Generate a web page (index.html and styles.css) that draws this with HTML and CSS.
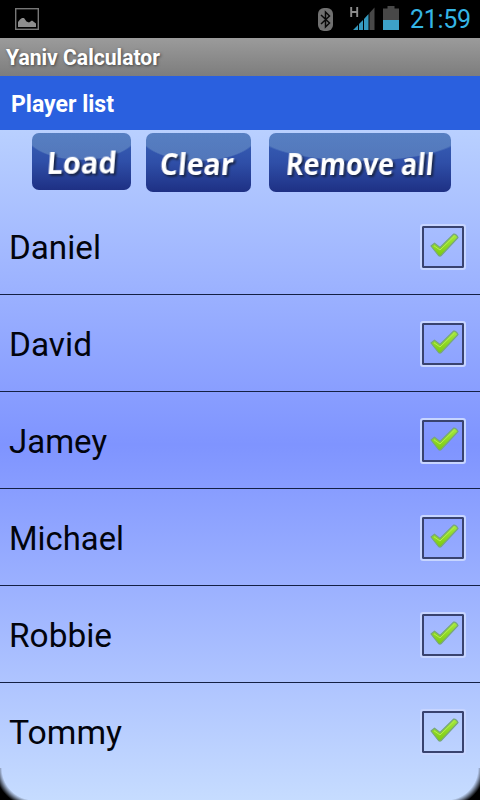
FILE: index.html
```html
<!DOCTYPE html>
<html lang="en">
<head>
    <meta charset="UTF-8">
    <meta name="viewport" content="width=device-width, initial-scale=1.0">
    <title>Yaniv Calculator</title>
    <link rel="stylesheet" href="styles.css">
</head>
<body>
    <!-- shared gradient and check mark -->
    <svg class="defs" width="0" height="0">
        <defs>
            <linearGradient id="green" x1="0" y1="0" x2="0" y2="1">
                <stop offset="0" stop-color="#a4e83c"/>
                <stop offset="1" stop-color="#7ccb10"/>
            </linearGradient>
            <symbol id="check" viewBox="0 0 42 42">
                <path d="M9 20 L12.5 17.2 L18 21.5 L31.5 8.2 Q34 7.6 36 11.5 L19.2 29.5 Q18 30.7 16.5 29.5 Z" fill="url(#green)" stroke="#78a67c" stroke-width="1.2" stroke-linejoin="round"/>
                <path d="M12 19.8 L18 24 L32.5 10" fill="none" stroke="#b4ec55" stroke-width="1"/>
            </symbol>
        </defs>
    </svg>

    <div class="status-bar">
        <svg class="picture-icon" width="24" height="22" viewBox="0 0 24 22">
            <rect x=".7" y=".7" width="22.6" height="20.6" fill="none" stroke="#777" stroke-width="1.4"/>
            <path d="M3 19 V14 L5 11.5 L7 10 H9 L11.5 13.5 L14 14.5 L17 12.5 L21 15.5 V19 Z" fill="#8e8e8e"/>
        </svg>
        <div class="status-icons">
            <svg width="15" height="23" viewBox="0 0 15 23">
                <rect width="15" height="23" rx="6" fill="#707070"/>
                <path d="M3 7 L11.5 15 L7.5 19 V4 L11.5 8 L3 16" fill="none" stroke="#080808" stroke-width="1.5"/>
            </svg>
            <svg class="signal" width="25" height="24" viewBox="0 0 25 24">
                <path d="M1.2 1 V11 M7.2 1 V11 M1 6 H7" stroke="#8c8c8c" stroke-width="1.9"/>
                <path d="M3 24 L8 19 V24 Z M9 18 L13 14 V24 H9 Z M14 13 L18.5 8 V24 H14 Z" fill="#3599be"/>
                <path d="M19.5 7 L24.5 1.5 V24 H19.5 Z" fill="#484848"/>
            </svg>
            <svg class="battery" width="16" height="24" viewBox="0 0 16 24">
                <path d="M0 2.5 H4.5 V0 H11.5 V2.5 H16 V14 H0 Z" fill="#484848"/>
                <path d="M0 14 H16 V24 H0 Z" fill="#3da1c8"/>
            </svg>
            <svg class="clock" width="62" height="30">
                <text x="0" y="24" textLength="61">21:59</text>
            </svg>
        </div>
    </div>

    <div class="title-bar"><svg width="170" height="38"><text x="0" y="27" textLength="154" lengthAdjust="spacingAndGlyphs">Yaniv Calculator</text></svg></div>
    <div class="list-header"><svg width="130" height="54"><text x="0" y="36" textLength="103" lengthAdjust="spacingAndGlyphs">Player list</text></svg></div>

    <main class="content">
        <div class="button-container">
            <button class="load"><svg width="99" height="57"><text transform="translate(14 41) rotate(-.5) skewX(-5)" textLength="70" lengthAdjust="spacingAndGlyphs">Load</text></svg></button>
            <button class="clear"><svg width="105" height="59"><text transform="translate(13 42) skewX(-5)" textLength="74" lengthAdjust="spacingAndGlyphs">Clear</text></svg></button>
            <button class="remove"><svg width="182" height="59"><text transform="translate(16 42) skewX(-5)" textLength="148" lengthAdjust="spacingAndGlyphs">Remove all</text></svg></button>
        </div>

        <ul class="players">
            <li><svg class="name" width="200" height="50"><text x="0" y="38" textLength="92" lengthAdjust="spacingAndGlyphs">Daniel</text></svg><span class="checkbox"><svg width="42" height="42"><use href="#check"/></svg></span></li>
            <li><svg class="name" width="200" height="50"><text x="0" y="38" textLength="83" lengthAdjust="spacingAndGlyphs">David</text></svg><span class="checkbox"><svg width="42" height="42"><use href="#check"/></svg></span></li>
            <li><svg class="name" width="200" height="50"><text x="0" y="38" textLength="98" lengthAdjust="spacingAndGlyphs">Jamey</text></svg><span class="checkbox"><svg width="42" height="42"><use href="#check"/></svg></span></li>
            <li><svg class="name" width="200" height="50"><text x="0" y="38" textLength="115" lengthAdjust="spacingAndGlyphs">Michael</text></svg><span class="checkbox"><svg width="42" height="42"><use href="#check"/></svg></span></li>
            <li><svg class="name" width="200" height="50"><text x="0" y="38" textLength="103" lengthAdjust="spacingAndGlyphs">Robbie</text></svg><span class="checkbox"><svg width="42" height="42"><use href="#check"/></svg></span></li>
            <li><svg class="name" width="200" height="50"><text x="0" y="38" textLength="113" lengthAdjust="spacingAndGlyphs">Tommy</text></svg><span class="checkbox"><svg width="42" height="42"><use href="#check"/></svg></span></li>
        </ul>
        <div class="corner left"></div>
        <div class="corner right"></div>
    </main>
</body>
</html>
```

FILE: styles.css
```css
* {
    box-sizing: border-box;
}

body {
    margin: 0;
    width: 480px;
    height: 800px;
    display: flex;
    flex-direction: column;
    overflow: hidden;
    background-color: #000;
    font-family: Roboto, sans-serif;
}

svg {
    display: block;
    flex: none;
    overflow: visible;
}

.defs {
    position: absolute;
}

.status-bar {
    height: 38px;
    flex: none;
    display: flex;
    justify-content: space-between;
    align-items: flex-start;
    padding: 0 8px 0 15px;
}

.picture-icon {
    margin-top: 8px;
}

.status-icons {
    display: flex;
    align-items: flex-start;
}

.status-icons svg {
    margin-top: 8px;
}

.status-icons .signal {
    margin: 6px 0 0 17px;
}

.status-icons .battery {
    margin: 6px 0 0 8px;
}

.status-icons .clock {
    margin: 4px 0 0 11px;
    font-size: 25px;
    fill: #35b5e5;
}

.title-bar {
    height: 38px;
    flex: none;
    padding-left: 6px;
    background: linear-gradient(#9b9b9b, #7d7d7d);
    font-size: 22px;
    font-weight: bold;
    fill: #fff;
    text-shadow: 1px 1px 3px #444;
}

.list-header {
    height: 54px;
    flex: none;
    padding-left: 11px;
    background-color: #2a60df;
    font-size: 24px;
    font-weight: bold;
    fill: #fff;
}

.content {
    position: relative;
    flex: 1;
    background: linear-gradient(#b9d0ff, #7f94ff 47%, #c6dcff);
}

.button-container {
    display: flex;
    align-items: flex-start;
    height: 68px;
    padding: 3px 0 0 32px;
}

button {
    flex: none;
    padding: 0;
    border: none;
    border-radius: 7px;
    background: radial-gradient(ellipse 58% 48% at 50% 0, rgba(120, 160, 205, 0.48) 96%, transparent 100%), linear-gradient(#3861b8, #2f4fa8 50%, #1e3084);
    font-family: "Open Sans", sans-serif;
    font-size: 31px;
    font-weight: bold;
    fill: #fff;
    cursor: pointer;
}

button text {
    filter: drop-shadow(2px 2px 1px #172345);
}

.clear {
    margin-left: 15px;
}

.remove {
    margin-left: 18px;
}

.players {
    list-style: none;
    margin: 0;
    padding: 0;
}

.players li {
    display: flex;
    justify-content: space-between;
    align-items: center;
    height: 97px;
    padding: 0 14px 0 9px;
    border-bottom: 1px solid #142044;
}

.players li:last-child {
    border-bottom-color: transparent;
}

.name {
    font-size: 34px;
    fill: #02040c;
}

.checkbox {
    width: 46px;
    height: 46px;
    margin-top: 1px;
    border: 2px solid #c7d5ff;
    border-radius: 3px;
    box-shadow: inset 0 0 0 2px #39436f;
}

/* soft black corners at the bottom */
.corner {
    position: absolute;
    bottom: 0;
    width: 34px;
    height: 32px;
}

.left {
    left: 0;
    background: radial-gradient(circle at 100% 0, transparent 32px, #000 39px);
}

.right {
    right: 0;
    background: radial-gradient(circle at 0 0, transparent 32px, #000 39px);
}
```
